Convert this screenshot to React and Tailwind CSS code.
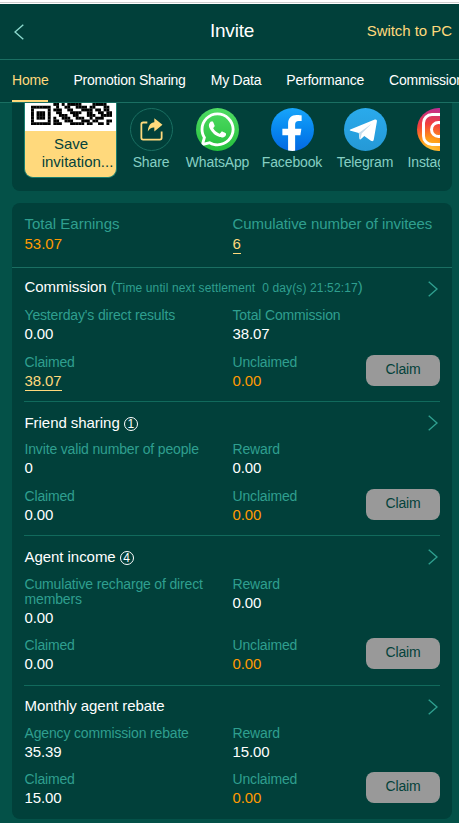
import { useState } from 'react';
import { FaFacebookF, FaWhatsapp } from 'react-icons/fa';

const tabs = ['Home', 'Promotion Sharing', 'My Data', 'Performance', 'Commission'];

const qrRows = [
    '00000000110101111100001111100',
    '11111110010011001111011000110',
    '10000010111001100011110110110',
    '10111010011000111100110011011',
    '10111010001110011000111001111',
    '10111010100111001110010111000',
    '10000010110011100011101100011',
    '11111110111000111110110011010',
];

const sections = [
    {
        title: 'Commission',
        countdown: '0 day(s) 21:52:17',
        label: "Yesterday's direct results",
        value: '0.00',
        rewardLabel: 'Total Commission',
        reward: '38.07',
        claimed: '38.07',
        claimedLink: true,
        titleClass: 'pb-[3px]',
        rowGap: 'mt-2',
        claimGap: 'mt-[11px] mb-[10px]',
    },
    {
        title: 'Friend sharing',
        badge: '1',
        label: 'Invite valid number of people',
        value: '0',
        rewardLabel: 'Reward',
        reward: '0.00',
        claimed: '0.00',
        rowGap: 'mt-2',
        claimGap: 'mt-[11px] mb-[10px]',
    },
    {
        title: 'Agent income',
        badge: '4',
        label: 'Cumulative recharge of direct members',
        value: '0.00',
        rewardLabel: 'Reward',
        reward: '0.00',
        claimed: '0.00',
        rowGap: 'mt-[9px]',
        claimGap: 'mt-[10px] mb-[11px]',
    },
    {
        title: 'Monthly agent rebate',
        label: 'Agency commission rebate',
        value: '35.39',
        rewardLabel: 'Reward',
        reward: '15.00',
        claimed: '15.00',
        titleClass: 'pb-[2px]',
        rowGap: 'mt-2',
        claimGap: 'mt-[10px]',
    },
];

const QrCode = () => (
    <svg viewBox="0 0 29 8" className="block w-[81px] h-[22px]" preserveAspectRatio="none">
        {qrRows.map((row, y) =>
            row.split('').map((cell, x) => (cell === '1' ? <rect key={`${x}-${y}`} x={x} y={y} width="1.05" height="1.05" /> : null))
        )}
    </svg>
);

const ShareIcon = () => (
    <svg viewBox="0 0 22 22" className="w-[23px] h-[23px]" fill="none">
        <path d="M7 4.3H3Q1.3 4.3 1.3 6V19Q1.3 20.7 3 20.7H19Q20.7 20.7 20.7 19V13" stroke="#ffd97c" strokeWidth="1.7" />
        <path d="M13.7 0.3 21.5 6.5 13.7 12.8V9.2C11 9 9 10.3 7.5 12.8C7.6 7.5 10.3 4.2 13.7 4Z" fill="#ffd97c" />
    </svg>
);

const TelegramIcon = () => (
    <svg viewBox="0 0 43 43" className="w-[43px] h-[43px]">
        <path d="M6.3 21.4 30.8 11.6C32.3 11.1 33.2 12 32.9 13.5L29.8 31.6C29.5 33.3 28.3 33.7 26.9 32.8L20.3 27.9 17 31.1C16.2 31.9 15.5 31.6 15.4 30.5L14.8 24.9 6.6 22.8C5.6 22.4 5.5 21.8 6.3 21.4Z" fill="#fff" />
        <path d="M14.8 24.9 27.6 15.7 17.7 25.6 16.4 31.4Z" fill="#c5dcec" />
    </svg>
);

const InstagramIcon = () => (
    <svg viewBox="0 0 43 43" className="w-[43px] h-[43px]" fill="none" stroke="#fff" strokeWidth="3">
        <rect x="6.5" y="6.5" width="30" height="30" rx="8.5" />
        <circle cx="21.5" cy="21.5" r="7" />
        <circle cx="30" cy="13" r="1" fill="#fff" stroke="none" />
    </svg>
);

const channels = [
    { name: 'Share', item: 'w-[44px]', circle: 'border border-[#1a6f62]', icon: <ShareIcon /> },
    { name: 'WhatsApp', item: 'w-[65px] ml-[12px]', circle: 'bg-linear-to-b from-[#4fdc63] to-[#22c03c]', icon: <FaWhatsapp className="w-[39px] h-[39px] text-white" /> },
    { name: 'Facebook', item: 'w-[62px] ml-[11px]', circle: 'items-end bg-linear-to-b from-[#18a5fb] to-[#0668e3]', icon: <FaFacebookF className="w-[36px] h-[36px] text-white" /> },
    { name: 'Telegram', item: 'w-[58px] ml-[13px]', circle: 'bg-linear-to-b from-[#2aaaec] to-[#2599d6]', icon: <TelegramIcon /> },
    { name: 'Instagram', item: 'w-[62px] ml-[13px]', circle: 'bg-[radial-gradient(circle_at_30%_107%,#ffd043_0%,#ff9a16_28%,#f2403c_55%,#c62f86_80%,#8a3ac8_100%)]', icon: <InstagramIcon /> },
];

const Chevron = () => (
    <svg viewBox="0 0 10 16" className="w-[10px] h-[16px] mr-[2px] mb-px" fill="none" stroke="#2f9f8f" strokeWidth="1.4">
        <path d="M0.7 0.8 9 8 0.7 15.2" />
    </svg>
);

const Stat = ({ label, value, valueClass = 'text-white' }) => (
    <div className="pl-[0.5px]">
        <div className="text-[14px] leading-[15px] tracking-[-0.16px] text-[#2f9f8f]">{label}</div>
        <div className="mt-px h-5 text-[15px] leading-5 tracking-[-0.1px]">
            <span className={valueClass}>{value}</span>
        </div>
    </div>
);

const Section = ({ data, last }) => (
    <div className={`mx-3 pt-[10px] ${last ? '' : 'border-b border-[#116a5c]'}`}>
        <div className="flex items-center justify-between h-[22px]">
            <div className={`flex items-center whitespace-pre pl-[0.5px] text-[15px] tracking-[-0.05px] text-white ${data.titleClass || ''}`}>
                {data.title}
                {data.countdown && (
                    <span className="text-[#2f9f8f]">
                        {' ('}
                        <span className="text-[12px] tracking-[0.13px]">Time until next settlement  {data.countdown}</span>)
                    </span>
                )}
                {data.badge && (
                    <span className="ml-1 mt-[2px] w-[14px] h-[14px] rounded-full border border-white text-[12px] leading-[12px] text-center">{data.badge}</span>
                )}
            </div>
            <Chevron />
        </div>
        <div className={`grid grid-cols-2 ${data.rowGap}`}>
            <Stat label={data.label} value={data.value} />
            <Stat label={data.rewardLabel} value={data.reward} />
        </div>
        <div className={`grid grid-cols-2 ${data.claimGap}`}>
            <Stat
                label="Claimed"
                value={data.claimed}
                valueClass={data.claimedLink ? 'inline-block h-5 border-b border-[#ffd97c] text-[#ffd97c]' : 'text-white'}
            />
            <div className="flex justify-between">
                <Stat label="Unclaimed" value="0.00" valueClass="text-[#ff9a02]" />
                <button className="w-[74px] h-[31px] rounded-lg bg-[#999999] pb-[3px] text-[14px] tracking-[-0.16px] text-[#04423b]">Claim</button>
            </div>
        </div>
    </div>
);

const App = () => {
    const [activeTab, setActiveTab] = useState('Home');

    return (
        <div className="w-full h-[823px] overflow-hidden bg-[#045148] font-['Liberation_Sans',Arial,sans-serif]">
            <div className="h-1 bg-white pt-[2px]">
                <div className="h-px bg-[#cfcfcf]"></div>
            </div>

            <header className="grid grid-cols-3 items-center h-[56px] border-b border-[#1a6f62] bg-[#01403a] pl-[14px] pr-[7px]">
                <svg viewBox="0 0 10 16" className="w-[10px] h-[16px]" fill="none" stroke="#8bd8cc" strokeWidth="1.4">
                    <path d="M9.3 0.8 1 8 9.3 15.2" />
                </svg>
                <h1 className="pr-[2px] text-center text-[19px] tracking-[-0.2px] text-white">Invite</h1>
                <a className="text-right text-[15px] tracking-[-0.05px] text-[#ffd97c]">Switch to PC</a>
            </header>

            <nav className="flex h-[43px] gap-[25px] overflow-hidden border-b border-[#1a6f62] bg-[#01403a] pl-3">
                {tabs.map((tab) => (
                    <button
                        key={tab}
                        onClick={() => setActiveTab(tab)}
                        className={`shrink-0 h-[42px] border-b-2 text-[14px] tracking-[-0.22px] ${activeTab === tab ? 'border-[#ffd97c] text-[#ffd97c]' : 'border-transparent text-white'}`}
                    >
                        {tab}
                    </button>
                ))}
            </nav>

            <section className="mx-[12px] mr-[7px] flex h-[88px] rounded-b-[8px] bg-[#01403a] pl-[12px] pr-3">
                <div className="h-[75px] w-[93px] shrink-0 overflow-hidden rounded-b-[9px] border-x border-b border-[#1a7f6f] bg-[#ffd97c]">
                    <div className="h-[28px] bg-white pl-[6px]">
                        <QrCode />
                    </div>
                    <div className="pt-[4px] pl-px text-center text-[15px] leading-[18px] text-[#04423b]">
                        Save<br />
                        <span className="pl-[13px]">invitation...</span>
                    </div>
                </div>
                <div className="flex flex-1 overflow-hidden pl-[12px] pt-[5px]">
                    {channels.map((channel) => (
                        <div key={channel.name} className={`flex shrink-0 flex-col items-center ${channel.item}`}>
                            <div className={`flex h-[43px] w-[43px] items-center justify-center overflow-hidden rounded-full ${channel.circle}`}>
                                {channel.icon}
                            </div>
                            <span className="mt-[2px] text-[14px] leading-[18px] tracking-[-0.14px] text-[#85cfc3]">{channel.name}</span>
                        </div>
                    ))}
                </div>
            </section>

            <main className="mx-[12px] mr-[7px] mt-[12px] h-[616px] rounded-[8px] bg-[#01403a]">
                <div className="grid h-[65px] grid-cols-2 border-b border-[#1a6f62] px-3 pt-[12px] text-[15px] leading-[18px]">
                    <div className="pl-[0.5px]">
                        <div className="text-[#2f9f8f]">Total Earnings</div>
                        <div className="mt-[2px] text-[#ff9a02]">53.07</div>
                    </div>
                    <div className="pl-[0.5px]">
                        <div className="whitespace-nowrap tracking-[-0.07px] text-[#2f9f8f]">Cumulative number of invitees</div>
                        <div className="mt-[2px] inline-block h-[19px] border-b border-[#ffd97c] text-[#ffd97c]">6</div>
                    </div>
                </div>
                {sections.map((section, i) => (
                    <Section key={section.title} data={section} last={i === sections.length - 1} />
                ))}
            </main>
        </div>
    );
};

export default App;
